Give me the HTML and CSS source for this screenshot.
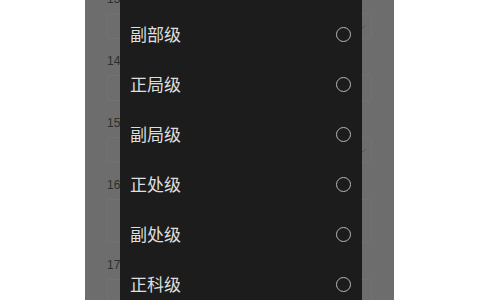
FILE: index.html
```html
<!DOCTYPE html>
<html lang="zh">
<head>
<meta charset="utf-8">
<link rel="stylesheet" href="styles.css">
</head>
<body>
<div class="screen">
  <div class="form">
    <div class="field">
      <div class="label">13</div>
      <div class="box select"><svg class="chev" width="8" height="5" viewBox="0 0 8 5"><polyline points="1,1 4,4 7,1" fill="none" stroke="#5a5a5a" stroke-width="1"/></svg></div>
    </div>
    <div class="field">
      <div class="label">14</div>
      <div class="box"></div>
    </div>
    <div class="field">
      <div class="label">15</div>
      <div class="box select"><svg class="chev" width="8" height="5" viewBox="0 0 8 5"><polyline points="1,1 4,4 7,1" fill="none" stroke="#5a5a5a" stroke-width="1"/></svg></div>
    </div>
    <div class="field">
      <div class="label">16</div>
      <div class="box tall"></div>
    </div>
    <div class="field">
      <div class="label">17</div>
      <div class="box"></div>
    </div>
  </div>
  <div class="dialog">
    <ul class="options">
      <li class="option"><span class="name">副部级</span><span class="radio"></span></li>
      <li class="option"><span class="name">正局级</span><span class="radio"></span></li>
      <li class="option"><span class="name">副局级</span><span class="radio"></span></li>
      <li class="option"><span class="name">正处级</span><span class="radio"></span></li>
      <li class="option"><span class="name">副处级</span><span class="radio"></span></li>
      <li class="option"><span class="name">正科级</span><span class="radio"></span></li>
    </ul>
  </div>
</div>
</body>
</html>
```
FILE: styles.css
```css
html, body {
  margin: 0;
  padding: 0;
  background: #ffffff;
}
body {
  width: 480px;
  height: 300px;
  overflow: hidden;
}
.screen {
  position: relative;
  margin-left: 85px;
  width: 309px;
  height: 300px;
  background: #6d6d6d;
  overflow: hidden;
  font-family: "Liberation Sans", "Noto Sans CJK SC", sans-serif;
}
.form {
  display: flex;
  flex-direction: column;
  gap: 15px;
  margin-top: -8px;
  padding-left: 22px;
  padding-right: 22px;
}
.field {
  display: flex;
  flex-direction: column;
  gap: 7px;
}
.label {
  height: 14px;
  line-height: 14px;
  font-size: 12px;
  color: #2e2e2e;
}
.box {
  box-sizing: border-box;
  height: 26px;
  border: 1px solid #727272;
  border-radius: 2px;
  display: flex;
  align-items: center;
  justify-content: flex-end;
  padding-right: 4px;
}
.box.tall {
  height: 44px;
}
.chev {
  display: block;
}
.dialog {
  position: absolute;
  top: 0;
  left: 35px;
  width: 242px;
  height: 300px;
  background: #1c1c1c;
}
.options {
  list-style: none;
  margin: 0;
  padding: 9px 0 0 0;
}
.option {
  height: 50px;
  display: flex;
  align-items: center;
  justify-content: space-between;
  padding: 0 11px 0 10px;
}
.name {
  font-family: "Noto Sans CJK SC", sans-serif;
  font-size: 17px;
  color: #dedede;
  position: relative;
  top: -1px;
}
.radio {
  box-sizing: border-box;
  width: 15px;
  height: 15px;
  border: 1.6px solid #b8b8b8;
  border-radius: 50%;
}
```
